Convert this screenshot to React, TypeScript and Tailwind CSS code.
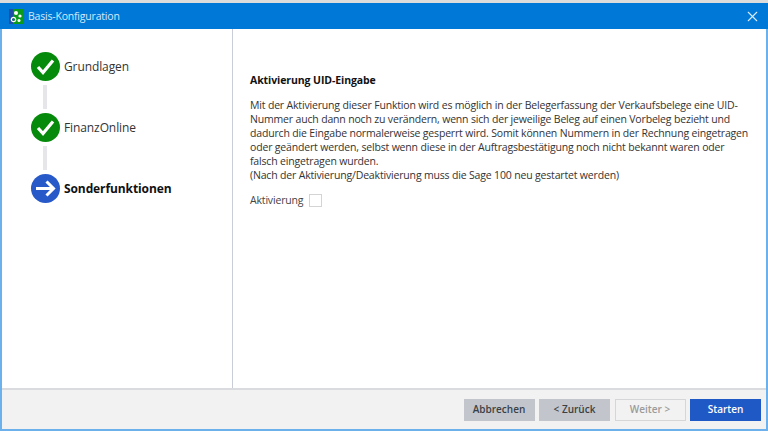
import { X } from "lucide-react";

const FONT = "font-['Open_Sans','Noto_Sans',sans-serif]";

function AppIcon() {
  return (
    <svg width="14" height="15" viewBox="0 0 14 15" className="shrink-0">
      <rect width="5" height="15" fill="#1d4fa8" />
      <rect x="4.5" width="9.5" height="15" fill="#0a9b1c" />
      <circle cx="7" cy="4" r="2" fill="#fff" />
      <circle cx="11" cy="7" r="1.6" fill="#fff" />
      <circle cx="4.5" cy="10.5" r="2.2" fill="none" stroke="#fff" strokeWidth="1.2" />
      <circle cx="10" cy="11.5" r="1.5" fill="#fff" />
    </svg>
  );
}

function StepBadge({ kind }: { kind: "done" | "current" }) {
  if (kind === "done") {
    return (
      <svg width="29" height="29" viewBox="0 0 29 29" className="shrink-0">
        <circle cx="14.5" cy="14.5" r="14.5" fill="#058a0b" />
        <path d="M7 15l5 5.5 10-12" fill="none" stroke="#fff" strokeWidth="3.2" />
      </svg>
    );
  }
  return (
    <svg width="29" height="29" viewBox="0 0 29 29" className="shrink-0">
      <circle cx="14.5" cy="14.5" r="14.5" fill="#2759c9" />
      <path d="M5 14.5h17M15.5 7.5l7 7-7 7" fill="none" stroke="#fff" strokeWidth="3" />
    </svg>
  );
}

function Step({ label, kind, last }: { label: string; kind: "done" | "current"; last?: boolean }) {
  return (
    <div className="flex flex-col">
      <div className="flex items-center gap-[4px]">
        <StepBadge kind={kind} />
        <span className={`text-[12px] tracking-[-0.1px] ${kind === "current" ? "font-bold text-[#111]" : "text-[#333]"}`}>
          {label}
        </span>
      </div>
      {!last && <div className="my-[4px] ml-[12px] h-[24px] w-[4px] bg-[#e6e6ea]" />}
    </div>
  );
}

function FooterButton({ label, tone }: { label: string; tone: "grey" | "disabled" | "primary" }) {
  const styles = {
    grey: "bg-[#c2c6cc] text-[#3c3f44]",
    disabled: "bg-[#f2f2f2] border border-[#d4d6d8] text-[#9a9a9a]",
    primary: "bg-[#1f59c6] text-white",
  };
  return (
    <div className={`flex h-[22px] w-[71px] items-center justify-center text-[10px] font-semibold ${styles[tone]}`}>
      {label}
    </div>
  );
}

export default function App() {
  return (
    <div className={`flex h-[431px] w-[768px] flex-col overflow-hidden bg-[#dcdcdc] pt-[3px] ${FONT}`}>
      <div className="flex h-[26px] items-center bg-[#0078d7] pl-[9px] pr-[7px]">
        <AppIcon />
        <span className="ml-[5px] mt-[1px] text-[10.5px] tracking-[-0.2px] text-[#d5e9fa]">Basis-Konfiguration</span>
        <X className="ml-auto text-[#dcecfa]" size={17} strokeWidth={1.5} />
      </div>
      <div className="flex min-h-0 flex-1 flex-col border-x-2 border-b-2 border-[#6cb0ec]">
        <div className="flex min-h-0 flex-1 bg-white">
          <div className="w-[231px] shrink-0 border-r border-[#c9ced6] pl-[29px] pt-[23px]">
            <Step label="Grundlagen" kind="done" />
            <Step label="FinanzOnline" kind="done" />
            <Step label="Sonderfunktionen" kind="current" last />
          </div>
          <div className="min-w-0 flex-1 pl-[17px] pr-[14px] pt-[44px] text-[10.5px] leading-[14px] tracking-[-0.17px] text-[#333]">
            <div className="font-bold tracking-[-0.09px] text-[#111]">Aktivierung UID-Eingabe</div>
            <p className="mt-[11px] whitespace-nowrap">
              Mit der Aktivierung dieser Funktion wird es möglich in der Belegerfassung der Verkaufsbelege eine UID-
              <br />
              Nummer auch dann noch zu verändern, wenn sich der jeweilige Beleg auf einen Vorbeleg bezieht und
              <br />
              dadurch die Eingabe normalerweise gesperrt wird. Somit können Nummern in der Rechnung eingetragen
              <br />
              oder geändert werden, selbst wenn diese in der Auftragsbestätigung noch nicht bekannt waren oder
              <br />
              falsch eingetragen wurden.
              <br />
              (Nach der Aktivierung/Deaktivierung muss die Sage 100 neu gestartet werden)
            </p>
            <div className="mt-[11px] flex items-center gap-[6px]">
              <span className="text-[#444]">Aktivierung</span>
              <div className="h-[13px] w-[13px] border border-[#d4d4d4] bg-white" />
            </div>
          </div>
        </div>
        <div className="flex h-[41px] shrink-0 items-center justify-end gap-[4.5px] border-t-2 border-[#d9dbde] bg-[#f2f2f2] pr-[5px]">
          <FooterButton label="Abbrechen" tone="grey" />
          <FooterButton label="< Zurück" tone="grey" />
          <FooterButton label="Weiter >" tone="disabled" />
          <FooterButton label="Starten" tone="primary" />
        </div>
      </div>
    </div>
  );
}
